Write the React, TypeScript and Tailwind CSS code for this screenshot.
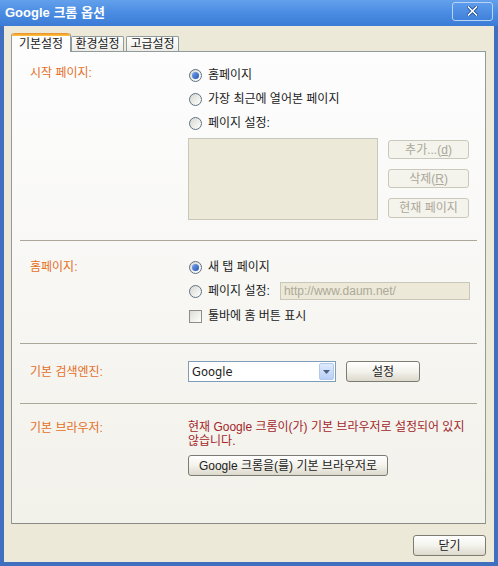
import type { ReactNode } from "react";

const FONT = "font-['Liberation_Sans','Noto_Sans_CJK_KR',sans-serif]";

function Radio({ checked }: { checked?: boolean }) {
  return (
    <span className="flex h-[13px] w-[13px] shrink-0 items-center justify-center rounded-full border border-[#5f7184] bg-linear-to-br from-[#d8d8d0] to-[#ffffff]">
      {checked && (
        <span className="h-[7px] w-[7px] rounded-full bg-linear-to-br from-[#79a6ec] to-[#2452ae]" />
      )}
    </span>
  );
}

function RadioRow({ checked, children, className = "" }: { checked?: boolean; children: ReactNode; className?: string }) {
  return (
    <div className={`flex items-center gap-[6px] pl-[1px] ${className}`}>
      <Radio checked={checked} />
      <span>{children}</span>
    </div>
  );
}

function Btn({ children, disabled, className = "" }: { children: ReactNode; disabled?: boolean; className?: string }) {
  const look = disabled
    ? "border-[#cbc8bb] bg-[#f4f3ec] text-[#aca899]"
    : "border-[#7d7c74] bg-linear-to-b from-[#ffffff] via-[#f3f2ec] to-[#dcd9cc] text-[#222222]";
  return (
    <div className={`flex items-center justify-center rounded-[3px] border ${look} ${className}`}>
      {children}
    </div>
  );
}

function Label({ children }: { children: ReactNode }) {
  return <div className="text-[#e56f26]">{children}</div>;
}

function Separator() {
  return <div className="mx-[8px] h-px bg-[#aca899]" />;
}

export default function App() {
  return (
    <div className={`flex h-[566px] w-[498px] flex-col bg-[#2c5aa8] text-[12px] leading-[14px] text-[#222222] ${FONT}`}>
      {/* title bar */}
      <div className="flex h-[26px] items-center justify-between bg-linear-to-b from-[#63a0ec] via-[#4a8ce2] to-[#3b7bd6] pl-[5px] pr-[5px]">
        <span className="text-[13px] font-bold text-white">Google 크롬 옵션</span>
        <div className="mt-[-4px] flex h-[19px] w-[41px] items-center justify-center rounded-[3px] border border-[#b9d3f5] bg-linear-to-b from-[#5d9cec] to-[#3f80da]">
          <svg width="11" height="10" viewBox="0 0 11 10">
            <path d="M1.5 1 L9.5 9 M9.5 1 L1.5 9" stroke="#1d4a94" strokeWidth="3.2" strokeLinecap="square" />
            <path d="M1.5 1 L9.5 9 M9.5 1 L1.5 9" stroke="#ffffff" strokeWidth="1.6" strokeLinecap="square" />
          </svg>
        </div>
      </div>

      {/* body */}
      <div className="flex flex-1 flex-col border-x-[4px] border-b-[4px] border-[#3f6fbe] bg-[#ece9d8] pl-[7px] pr-[8px] pt-[7px]">
        {/* tabs */}
        <div className="relative z-10 -mb-px flex h-[19px] items-end">
          <div className="flex h-[19px] w-[60px] flex-col rounded-t-[3px] border-x border-[#919b9c] bg-[#fdfdfd]">
            <div className="h-[3px] rounded-t-[3px] bg-linear-to-b from-[#e68b2c] to-[#ffc73c]" />
            <div className="flex flex-1 items-center justify-center pb-[1px]">기본설정</div>
          </div>
          <div className="mb-px flex h-[15px] w-[53px] items-center justify-center rounded-t-[2px] border-x border-t border-[#919b9c] bg-linear-to-b from-[#ffffff] to-[#ecebe5]">
            환경설정
          </div>
          <div className="mb-px ml-[2px] flex h-[15px] w-[53px] items-center justify-center rounded-t-[2px] border-x border-t border-[#919b9c] bg-linear-to-b from-[#ffffff] to-[#ecebe5]">
            고급설정
          </div>
        </div>

        {/* panel */}
        <div className="flex h-[473px] flex-col border border-[#919b9c] border-b-[#8a8a86] bg-linear-to-b from-[#fdfdfe] to-[#f2f1ea]">
          {/* start page */}
          <div className="grid h-[188px] grid-cols-[158px_1fr] content-start pl-[18px] pt-[11px]">
            <div className="flex h-[20px] items-center">
              <Label>시작 페이지:</Label>
            </div>
            <div className="flex flex-col">
              <RadioRow checked className="h-[24px]">홈페이지</RadioRow>
              <RadioRow className="h-[24px]">가장 최근에 열어본 페이지</RadioRow>
              <RadioRow className="h-[24px]">페이지 설정:</RadioRow>
              <div className="mt-[3px] flex">
                <div className="h-[82px] w-[190px] border border-[#c9c7ba] bg-[#ece9d8]" />
                <div className="ml-[10px] flex flex-col gap-[10px] pt-[2px]">
                  <Btn disabled className="h-[19px] w-[81px]">추가...(<span className="underline">d</span>)</Btn>
                  <Btn disabled className="h-[19px] w-[81px]">삭제(<span className="underline">R</span>)</Btn>
                  <Btn disabled className="h-[20px] w-[81px]">현재 페이지</Btn>
                </div>
              </div>
            </div>
          </div>
          <Separator />

          {/* home page */}
          <div className="grid h-[102px] grid-cols-[158px_1fr] content-start pl-[18px] pt-[14px]">
            <div className="flex h-[24px] items-center">
              <Label>홈페이지:</Label>
            </div>
            <div className="flex flex-col">
              <RadioRow checked className="h-[24px]">새 탭 페이지</RadioRow>
              <div className="flex h-[24px] items-center">
                <RadioRow>페이지 설정:</RadioRow>
                <div className="ml-[10px] flex h-[18px] w-[190px] items-center border border-[#c9c7ba] bg-[#ece9d8] pl-[3px] text-[#aca899]">
                  http://www.daum.net/
                </div>
              </div>
              <div className="mt-[1px] flex h-[24px] items-center gap-[6px] pl-[1px]">
                <span className="h-[13px] w-[13px] border border-[#8c8c8a] bg-linear-to-br from-[#dcdcd6] to-[#ffffff]" />
                <span>툴바에 홈 버튼 표시</span>
              </div>
            </div>
          </div>
          <Separator />

          {/* search engine */}
          <div className="grid h-[59px] grid-cols-[158px_1fr] content-start items-start pl-[18px] pt-[17px]">
            <div className="flex h-[21px] items-center">
              <Label>기본 검색엔진:</Label>
            </div>
            <div className="flex h-[21px] items-center">
              <div className="flex h-[21px] w-[148px] items-center justify-between border border-[#7f9db9] bg-white pl-[3px] pr-[1px]">
                <span className="font-['DejaVu_Sans',sans-serif] text-[11.5px]">Google</span>
                <div className="flex h-[17px] w-[15px] items-center justify-center rounded-[2px] border border-[#b1c9ef] bg-linear-to-b from-[#dfeafd] to-[#b9cff5]">
                  <svg width="7" height="4" viewBox="0 0 7 4">
                    <path d="M0 0 H7 L3.5 4 Z" fill="#4d6185" />
                  </svg>
                </div>
              </div>
              <Btn className="ml-[10px] h-[21px] w-[74px]">설정</Btn>
            </div>
          </div>
          <Separator />

          {/* default browser */}
          <div className="grid flex-1 grid-cols-[158px_1fr] content-start pl-[18px] pt-[17px]">
            <div className="flex h-[14px] items-center">
              <Label>기본 브라우저:</Label>
            </div>
            <div className="flex flex-col pr-[14px]">
              <div className="leading-[13.5px] text-[#a3262a]">
                현재 Google 크롬이(가) 기본 브라우저로 설정되어 있지 않습니다.
              </div>
              <Btn className="mt-[7px] h-[21px] w-[200px]">Google 크롬을(를) 기본 브라우저로</Btn>
            </div>
          </div>
        </div>

        {/* footer */}
        <div className="mt-[11px] flex justify-end">
          <Btn className="h-[21px] w-[73px]">닫기</Btn>
        </div>
      </div>
    </div>
  );
}
